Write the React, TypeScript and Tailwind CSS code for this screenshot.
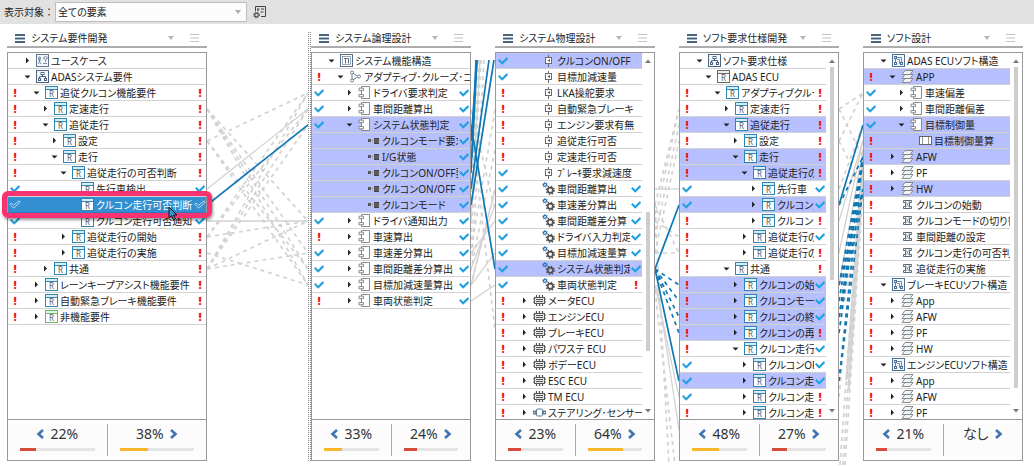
// Traceability view — element trees side by side, linked by connector lines.

import { useState } from 'react';
import type { ReactNode } from 'react';
import clsx from 'clsx';

type Mark = 'ok' | 'ng' | null;
type IconName =
  | 'usecase'
  | 'org'
  | 'req'
  | 'reqGreen'
  | 'reqGray'
  | 'function'
  | 'split'
  | 'component'
  | 'port'
  | 'pin'
  | 'gears'
  | 'chip'
  | 'sensor'
  | 'structure'
  | 'layers'
  | 'frame'
  | 'routine';
type Toggle = 'open' | 'closed' | null;

interface Row {
  label: string;
  icon: IconName;
  level: number;
  toggle: Toggle;
  left: Mark;
  right: Mark;
  lit?: boolean;
}

interface Rate {
  text: string;
  value?: number;
  tone?: 'red' | 'amber';
}

interface PanelData {
  title: string;
  rows: Row[];
  rates: [Rate, Rate];
  scroll?: { top: number; size: number };
  selected?: number;
}

const MARKS: Record<string, Mark> = { o: 'ok', x: 'ng', '-': null };
const TOGGLES: Record<string, Toggle> = { v: 'open', '>': 'closed', '-': null };

// flags: left mark, toggle, right mark, optional "*" for a linked row
function row(flags: string, level: number, icon: IconName, label: string): Row {
  return {
    label,
    icon,
    level,
    left: MARKS[flags[0]],
    toggle: TOGGLES[flags[1]],
    right: MARKS[flags[2]],
    lit: flags[3] === '*',
  };
}

const REQUIREMENTS: PanelData = {
  title: 'システム要件開発',
  selected: 9,
  rates: [
    { text: '22%', value: 22, tone: 'red' },
    { text: '38%', value: 38, tone: 'amber' },
  ],
  rows: [
    row('->-', 0, 'usecase', 'ユースケース'),
    row('-v-', 0, 'org', 'ADASシステム要件'),
    row('xvx', 1, 'req', '追従クルコン機能要件'),
    row('x>x', 2, 'req', '定速走行'),
    row('xvx', 2, 'req', '追従走行'),
    row('x>x', 3, 'req', '設定'),
    row('xvx', 3, 'req', '走行'),
    row('xvx', 4, 'req', '追従走行の可否判断'),
    row('o-o', 5, 'req', '先行車検出'),
    row('o-o', 5, 'req', 'クルコン走行可否判断'),
    row('o-o', 5, 'req', 'クルコン走行可否通知'),
    row('x>x', 4, 'req', '追従走行の開始'),
    row('x>x', 4, 'req', '追従走行の実施'),
    row('x>x', 2, 'req', '共通'),
    row('x>x', 1, 'req', 'レーンキープアシスト機能要件'),
    row('x>x', 1, 'req', '自動緊急ブレーキ機能要件'),
    row('x>x', 1, 'reqGreen', '非機能要件'),
  ],
};

const LOGICAL: PanelData = {
  title: 'システム論理設計',
  rates: [
    { text: '33%', value: 33, tone: 'amber' },
    { text: '24%', value: 25, tone: 'red' },
  ],
  rows: [
    row('-v-', 0, 'function', 'システム機能構造'),
    row('xv-', 1, 'split', 'アダプティブ･クルーズ･コ'),
    row('o>o', 2, 'component', 'ドライバ要求判定'),
    row('o>o', 2, 'component', '車間距離算出'),
    row('ovo*', 2, 'component', 'システム状態判定'),
    row('--o*', 3, 'port', 'クルコンモード要求'),
    row('--o*', 3, 'port', 'I/G状態'),
    row('--o*', 3, 'port', 'クルコンON/OFF要'),
    row('--o*', 3, 'port', 'クルコンON/OFF'),
    row('--o*', 3, 'port', 'クルコンモード'),
    row('o>o', 2, 'component', 'ドライバ通知出力'),
    row('x>o', 2, 'component', '車速算出'),
    row('o>o', 2, 'component', '車速差分算出'),
    row('o>o', 2, 'component', '車間距離差分算出'),
    row('o>o', 2, 'component', '目標加減速量算出'),
    row('x>o', 2, 'component', '車両状態判定'),
  ],
};

const PHYSICAL: PanelData = {
  title: 'システム物理設計',
  scroll: { top: 43, size: 41 },
  rates: [
    { text: '23%', value: 24, tone: 'red' },
    { text: '64%', value: 65, tone: 'amber' },
  ],
  rows: [
    row('o--*', 2, 'pin', 'クルコンON/OFF'),
    row('o--', 2, 'pin', '目標加減速量'),
    row('x--', 2, 'pin', 'LKA操舵要求'),
    row('x--', 2, 'pin', '自動緊急ブレーキ'),
    row('x--', 2, 'pin', 'エンジン要求有無'),
    row('x--', 2, 'pin', '追従走行可否'),
    row('x--', 2, 'pin', '定速走行可否'),
    row('o--', 2, 'pin', 'ﾌﾞﾚｰｷ要求減速度'),
    row('o-o', 2, 'gears', '車間距離算出'),
    row('o-o', 2, 'gears', '車速差分算出'),
    row('o-o', 2, 'gears', '車間距離差分算'),
    row('o-o', 2, 'gears', 'ドライバ入力判定'),
    row('o-o', 2, 'gears', '目標加減速量算'),
    row('o-o*', 2, 'gears', 'システム状態判定'),
    row('o-x', 2, 'gears', '車両状態判定'),
    row('x>-', 1, 'chip', 'メータECU'),
    row('x>-', 1, 'chip', 'エンジンECU'),
    row('x>-', 1, 'chip', 'ブレーキECU'),
    row('x>-', 1, 'chip', 'パワステ ECU'),
    row('x>-', 1, 'chip', 'ボデーECU'),
    row('x>-', 1, 'chip', 'ESC ECU'),
    row('x>-', 1, 'chip', 'TM ECU'),
    row('x>-', 1, 'sensor', 'ステアリング･センサー'),
  ],
};

const SOFT_REQUIREMENTS: PanelData = {
  title: 'ソフト要求仕様開発',
  scroll: { top: 0, size: 63 },
  rates: [
    { text: '48%', value: 50, tone: 'amber' },
    { text: '27%', value: 28, tone: 'red' },
  ],
  rows: [
    row('-v-', 0, 'org', 'ソフト要求仕様'),
    row('-v-', 1, 'reqGray', 'ADAS ECU'),
    row('xvx', 2, 'req', 'アダプティブクルーズ'),
    row('x>x', 3, 'req', '定速走行'),
    row('xvx*', 3, 'req', '追従走行'),
    row('x>x', 4, 'req', '設定'),
    row('xvx*', 4, 'req', '走行'),
    row('xvx*', 5, 'req', '追従走行の'),
    row('o>o', 6, 'req', '先行車'),
    row('o>o*', 6, 'req', 'クルコン走'),
    row('x>x', 6, 'req', 'クルコン走'),
    row('x>o', 5, 'req', '追従走行の'),
    row('x>x', 5, 'req', '追従走行の'),
    row('xvx', 3, 'req', '共通'),
    row('x>o*', 4, 'req', 'クルコンの始動'),
    row('x>o*', 4, 'req', 'クルコンモード'),
    row('x>o*', 4, 'req', 'クルコンの終了'),
    row('x>x*', 4, 'req', 'クルコンの再開'),
    row('xvo', 4, 'req', 'クルコン走行の'),
    row('o>o', 5, 'req', 'クルコンOF'),
    row('o>o*', 5, 'req', 'クルコン走行'),
    row('o>x', 5, 'req', 'クルコン走行'),
    row('x>x', 5, 'req', 'クルコン走行'),
  ],
};

const SOFT_DESIGN: PanelData = {
  title: 'ソフト設計',
  scroll: { top: 0, size: 95 },
  rates: [{ text: '21%', value: 21, tone: 'red' }, { text: 'なし' }],
  rows: [
    row('-v-', 0, 'structure', 'ADAS ECUソフト構造'),
    row('xv-*', 1, 'layers', 'APP'),
    row('o>-', 2, 'component', '車速偏差'),
    row('o>-', 2, 'component', '車間距離偏差'),
    row('ov-*', 2, 'component', '目標制御量'),
    row('x--*', 3, 'frame', '目標制御量算'),
    row('x>-*', 1, 'layers', 'AFW'),
    row('x>-', 1, 'layers', 'PF'),
    row('x>-*', 1, 'layers', 'HW'),
    row('x--', 1, 'routine', 'クルコンの始動'),
    row('x--', 1, 'routine', 'クルコンモードの切り替'),
    row('x--', 1, 'routine', '車間距離の設定'),
    row('x--', 1, 'routine', 'クルコン走行の可否判'),
    row('x--', 1, 'routine', '追従走行の実施'),
    row('-v-', 0, 'structure', 'ブレーキECUソフト構造'),
    row('x>-', 1, 'layers', 'App'),
    row('x>-', 1, 'layers', 'AFW'),
    row('x>-', 1, 'layers', 'PF'),
    row('x>-', 1, 'layers', 'HW'),
    row('-v-', 0, 'structure', 'エンジンECUソフト構造'),
    row('x>-', 1, 'layers', 'App'),
    row('x>-', 1, 'layers', 'AFW'),
    row('x>-', 1, 'layers', 'PF'),
  ],
};

// kind: g = gray, b = blue; upper case = solid, lower case = dashed
type Link = [kind: 'g' | 'G' | 'b' | 'B', x1: number, y1: number, x2: number, y2: number];

const rowY = (i: number) => 61 + i * 16;

function fan(kind: Link[0], width: number, from: number, to: number[]): Link[] {
  return to.map(t => [kind, 0, rowY(from), width, rowY(t)]);
}

const LINKS_1: Link[] = [
  ...fan('g', 101, 3, [10, 12, 13, 14]),
  ...fan('g', 101, 5, [2, 13, 14]),
  ...fan('g', 101, 11, [2, 3, 10]),
  ...fan('g', 101, 12, [14]),
  ...fan('g', 101, 13, [2, 3, 4, 10, 12]),
  ...fan('G', 101, 8, [3]),
  ...fan('G', 101, 10, [10]),
  ...fan('B', 101, 9, [4]),
];

const LINKS_2: Link[] = [
  ['g', 8, 60, 0, 200],
  ['g', 10, 60, 0, 240],
  ['g', 13, 60, 1, 260],
  ['g', 24, 110, 0, 250],
  ['g', 24, 150, 0, 270],
  ['g', 24, 190, 0, 285],
  ['g', 0, 125, 24, 330],
  ['g', 0, 110, 24, 210],
  ['G', 9, 60, 0, 221],
  ['G', 24, 205, 0, 269],
  ['G', 24, 221, 0, 253],
  ['G', 24, 189, 0, 285],
  ['G', 24, 253, 0, 285],
  ['G', 24, 285, 0, 301],
  ['B', 5, 60, 0, 173],
  ['B', 6, 60, 0, 141],
  ['B', 6, 60, 1, 157],
  ['B', 18, 60, 0, 189],
  ['B', 23, 60, 0, 205],
  ['B', 0, 125, 24, 269],
];

const LINKS_3: Link[] = [
  ['g', 0, 205, 24, 109],
  ['g', 0, 221, 24, 109],
  ['g', 0, 237, 24, 125],
  ['g', 0, 253, 24, 141],
  ['g', 0, 205, 24, 253],
  ['g', 0, 221, 24, 237],
  ['g', 0, 253, 24, 253],
  ['g', 0, 210, 14, 465],
  ['g', 0, 290, 20, 465],
  ['G', 0, 189, 24, 189],
  ['G', 0, 285, 24, 397],
  ['G', 2, 285, 24, 430],
  ...fan('b', 24, 13, [14, 15, 16, 17]),
  ...fan('B', 24, 13, [9, 20]),
];

const LINKS_4: Link[] = [
  ['g', 0, 109, 24, 93],
  ['g', 0, 109, 24, 157],
  ['g', 0, 141, 24, 93],
  ['g', 0, 141, 24, 189],
  ['g', 0, 189, 24, 125],
  ['G', 0, 221, 24, 140],
  ['G', 0, 253, 24, 140],
  ['G', 0, 285, 24, 150],
  ['G', 7, 380, 24, 150],
  ['G', 8, 380, 24, 160],
  ['G', 9, 390, 24, 170],
  ['G', 10, 390, 24, 180],
  ['g', 0, 301, 24, 157],
  ['g', 0, 333, 24, 189],
  ['g', 0, 397, 24, 157],
  ['g', 1, 465, 24, 150],
  ['g', 4, 465, 24, 157],
  ['g', 6, 465, 24, 189],
  ['b', 0, 205, 24, 157],
  ...[285, 301, 317, 333, 381].map((y): Link => ['b', 0, y, 24, 157]),
  ...[285, 317, 381].map((y): Link => ['b', 0, y, 24, 189]),
  ['B', 0, 205, 24, 125],
];

function Connectors({ width, links }: { width: number; links: Link[] }) {
  return (
    <svg
      className="h-full min-w-0 flex-1"
      viewBox={`0 24 ${width} 442`}
      preserveAspectRatio="none"
      aria-hidden="true"
    >
      {links.map(([kind, x1, y1, x2, y2], i) => {
        const blue = kind.toLowerCase() === 'b';
        const dashed = kind === kind.toLowerCase();
        return (
          <line
            key={i}
            x1={x1}
            y1={y1}
            x2={x2}
            y2={y2}
            stroke={blue ? '#0f78b4' : '#d2d2d2'}
            strokeWidth={dashed || blue ? 1.7 : 1.3}
            strokeDasharray={dashed ? '4 4' : undefined}
          />
        );
      })}
    </svg>
  );
}

function ReqIcon({ color, fill }: { color: string; fill: string }) {
  return (
    <>
      <rect x=".5" y=".5" width="12" height="12" fill="#fff" stroke={color} />
      <path d="M1 1h11v2H1z" fill={fill} />
      <path d="M1 3.5h11" stroke={color} />
      <text x="6.5" y="11" textAnchor="middle" fontSize="8" fill="#555">
        R
      </text>
    </>
  );
}

const ICONS: Record<IconName, ReactNode> = {
  req: <ReqIcon color="#2f86b0" fill="#d5eefa" />,
  reqGreen: <ReqIcon color="#6cb86c" fill="#e2f6e2" />,
  reqGray: <ReqIcon color="#666" fill="#eee" />,
  usecase: (
    <g fill="none" stroke="#5f7590">
      <rect x=".5" y=".5" width="12" height="12" fill="#f3f6fa" />
      <circle cx="3.5" cy="4" r="1" />
      <path d="M3.5 5v3M2 6h3M2 10l1.5-2L5 10M9.500 6v2M7 9.500h4" strokeWidth=".8" />
      <ellipse cx="9.500" cy="4" rx="2" ry="1.300" strokeWidth=".8" />
    </g>
  ),
  org: (
    <g fill="none" stroke="#4d6480">
      <rect x=".5" y=".5" width="12" height="12" fill="#f3f6fa" />
      <rect x="5" y="2.500" width="3" height="2" />
      <path d="M6.500 5v2M3.500 8V6.500h6V8" />
      <rect x="2.500" y="8.500" width="2" height="2" />
      <rect x="8.500" y="8.500" width="2" height="2" />
    </g>
  ),
  function: (
    <g fill="none" stroke="#5a7089">
      <rect x=".5" y=".5" width="12" height="12" />
      <rect x="2.500" y="2.500" width="8" height="8" strokeWidth=".6" />
      <path d="M4 4.500h1.500v5M5.500 4.500h3v5" />
    </g>
  ),
  split: (
    <g fill="#fff" stroke="#6f8296">
      <path d="M3 2.500l6 4-6 4z" fill="none" />
      <circle cx="3" cy="2.500" r="1.500" />
      <circle cx="3" cy="10.500" r="1.500" />
      <circle cx="10" cy="6.500" r="1.500" />
    </g>
  ),
  component: (
    <g fill="#fff" stroke="#808080" strokeWidth=".9">
      <path d="M3.500 .5h8v12h-8z" />
      <path d="M5.500 2.200H1v2.300h4.500zM5.500 8.500H1v2.300h4.500z" />
    </g>
  ),
  port: (
    <g>
      <path d="M1 5h3v3H1z" fill="#555" />
      <path d="M5 6h1v1H5z" fill="#777" />
      <path d="M7 4h5v6H7z" fill="#444" />
      <path d="M7 6h5M7 8h5" stroke="#999" strokeWidth=".6" />
    </g>
  ),
  pin: (
    <g fill="none" stroke="#6a6a6a">
      <path d="M6.500 1v2M6.500 10v3" />
      <rect x="3.500" y="3.500" width="6" height="6" fill="#fff" />
      <path d="M8 5v3L5.500 6.500z" fill="#555" stroke="none" />
    </g>
  ),
  gears: (
    <g fill="none">
      <circle cx="3" cy="2.800" r="1.500" stroke="#2e6fb5" strokeWidth="1.200" />
      <circle cx="3" cy="2.800" r="2.500" stroke="#2e6fb5" strokeDasharray="1 1.600" />
      <circle cx="8.300" cy="8.300" r="2.600" stroke="#505050" strokeWidth="1.700" />
      <circle cx="8.300" cy="8.300" r="3.900" stroke="#505050" strokeWidth="1.500" strokeDasharray="1.500 1.560" />
    </g>
  ),
  chip: (
    <g fill="none" stroke="#555">
      <path d="M3.500 1v11M6.500 1v11M9.500 1v11" strokeWidth="1.200" />
      <rect x="1.500" y="3.500" width="10" height="6" fill="#e6e6e6" />
      <path d="M3 5.500h7M3 7.500h7M0 5h1M0 8h1M12 5h1M12 8h1" />
    </g>
  ),
  sensor: (
    <g fill="#fff" stroke="#5c7a94">
      <rect x="3.500" y="3" width="6" height="7" rx="1" />
      <rect x=".5" y="5" width="2" height="3" />
      <rect x="10.500" y="5" width="2" height="3" />
    </g>
  ),
  structure: (
    <g fill="none" stroke="#4d6f94">
      <rect x=".5" y=".5" width="12" height="12" fill="#f4f8fc" />
      <rect x="2.500" y="2.500" width="2" height="2" />
      <rect x="2.500" y="8.500" width="2" height="2" />
      <rect x="8.500" y="8.500" width="2" height="2" />
      <path d="M5 3.500h4.500V8M3.500 5v3M5 5.500h2.500v4H8" strokeWidth=".8" />
    </g>
  ),
  layers: (
    <g fill="#eef3f7" stroke="#808080" strokeWidth=".9">
      <path d="M4 8.500h8l-3 4H1z" />
      <path d="M4 4.500h8l-3 4H1z" />
      <path d="M4 .5h8l-3 4H1z" />
    </g>
  ),
  frame: (
    <g fill="none" stroke="#666">
      <rect x=".5" y="2.500" width="12" height="8" fill="#fff" />
      <path d="M3.500 2v9M9.500 2v9" strokeWidth=".7" />
    </g>
  ),
  routine: (
    <g fill="none" stroke="#52697f">
      <path d="M2.500 2.500h8v2h-2v4h2v2h-8v-2h2v-4h-2z" fill="#fff" />
      <path d="M4 2.500l5 8M9 2.500l-5 8" strokeWidth=".6" />
    </g>
  ),
};

function MarkIcon({ mark, selected }: { mark: Mark; selected: boolean }) {
  if (mark === 'ng') {
    return <span className="text-[11px] leading-none font-black text-[#f51414]">!</span>;
  }
  if (mark === 'ok' && selected) {
    return (
      <svg width="12" height="9" viewBox="0 0 12 9" fill="none" role="img" aria-label="OK">
        <path
          d="M.8 4.300l1.400-1.400 2.400 2.400L10 .8l1.300 1.300L4.600 8.200z"
          stroke="#c5e6fa"
          strokeWidth=".9"
        />
      </svg>
    );
  }
  if (mark === 'ok') {
    return (
      <svg width="10" height="8" viewBox="0 0 10 8" fill="none" role="img" aria-label="OK">
        <path d="M.8 2.800l3.400 3.400L9.400 1" stroke="#1f9fe0" strokeWidth="2.100" />
      </svg>
    );
  }
  return null;
}

function ToggleButton({ toggle, label }: { toggle: Toggle; label: string }) {
  if (!toggle) return <span className="w-2.5 shrink-0" />;
  return (
    <button
      type="button"
      aria-label={label}
      aria-expanded={toggle === 'open'}
      className="flex w-2.5 shrink-0 items-center justify-center"
    >
      <svg width="7" height="7" viewBox="0 0 7 7" fill="#222">
        {toggle === 'open' ? <path d="M.5 2.500h6l-3 3z" /> : <path d="M2 .5l3 3-3 3z" />}
      </svg>
    </button>
  );
}

function TreeRow({ item, selected }: { item: Row; selected: boolean }) {
  return (
    <li
      className={clsx(
        'relative flex h-4 shrink-0 items-stretch border-b',
        selected && 'z-10 border-[#2b7fc0] bg-[#338fd0] text-white',
        !selected && 'border-[#d2d2d2]',
        item.lit && 'bg-[#b6c0ff]',
      )}
    >
      <span className="flex w-3.5 shrink-0 items-center justify-center">
        <MarkIcon mark={item.left} selected={selected} />
      </span>
      <span className="shrink-0" style={{ width: item.level * 9 }} />
      <ToggleButton toggle={item.toggle} label={item.label} />
      <span className="flex min-w-0 flex-1 items-center gap-[2px] overflow-hidden pl-1">
        <svg className="shrink-0" width="13" height="13" viewBox="0 0 13 13" aria-hidden="true">
          {ICONS[item.icon]}
        </svg>
        <span className="min-w-0 flex-1 overflow-hidden pt-px leading-4 whitespace-nowrap">
          {item.label}
        </span>
      </span>
      {item.right && (
        <span className="flex w-3 shrink-0 items-center justify-center">
          <MarkIcon mark={item.right} selected={selected} />
        </span>
      )}
      {selected && (
        <>
          <span className="pointer-events-none absolute -inset-1.5 rounded-md border-[5px] border-[#fb3271] shadow-[1px_2px_3px_rgba(0,0,0,0.4)]" />
          <svg
            className="pointer-events-none absolute right-7 -bottom-2.5"
            width="10"
            height="16"
            viewBox="0 0 10 16"
            aria-hidden="true"
          >
            <path d="M1 1v11l2.500-2.500L5.500 14l2-1-2-4H9z" fill="#3a93cf" stroke="#111" />
          </svg>
        </>
      )}
    </li>
  );
}

function ScrollBar({ top, size }: { top: number; size: number }) {
  return (
    <div className="flex w-3 shrink-0 flex-col items-center gap-1 py-1.5" aria-hidden="true">
      <svg width="6" height="4" viewBox="0 0 6 4" fill="#777">
        <path d="M0 4l3-3.500L6 4z" />
      </svg>
      <div className="w-1 flex-1">
        <div style={{ height: `${top}%` }} />
        <div className="bg-[#cdcdcd]" style={{ height: `${size}%` }} />
      </div>
      <svg width="6" height="4" viewBox="0 0 6 4" fill="#777">
        <path d="M0 0l3 3.500L6 0z" />
      </svg>
    </div>
  );
}

function RateCell({ rate, side }: { rate: Rate; side: 'left' | 'right' }) {
  const chevron = (
    <svg width="8" height="10" viewBox="0 0 8 10" fill="none" stroke="#3f74ae" strokeWidth="2.600">
      {side === 'left' ? <path d="M7 1L2.500 5 7 9" /> : <path d="M1 1l4.500 4L1 9" />}
    </svg>
  );
  return (
    <div className="flex min-w-0 flex-1 flex-col px-3 pt-1">
      <button
        type="button"
        className="flex h-5 items-center justify-center gap-1.5 text-[14px] leading-5 text-[#333]"
      >
        {side === 'left' && chevron}
        {rate.text}
        {side === 'right' && chevron}
      </button>
      {rate.value !== undefined && (
        <div className="mt-1 h-[3px] bg-[#e4e4e4]">
          <div
            className={clsx('h-full', rate.tone === 'red' ? 'bg-[#d94a3d]' : 'bg-[#f9b62b]')}
            style={{ width: `${rate.value}%` }}
          />
        </div>
      )}
    </div>
  );
}

function Panel({ data }: { data: PanelData }) {
  return (
    <section className="mb-[5px] flex min-h-0 min-w-0 flex-col">
      <header className="flex h-6 shrink-0 items-center border-b-2 border-[#adadad] px-2 pt-1.5">
        <svg className="shrink-0" width="10" height="9" viewBox="0 0 10 9" fill="#4b6480" aria-hidden="true">
          <path d="M0 0h10v2H0zM0 3.500h10v2H0zM0 7h10v2H0z" />
        </svg>
        <h2 className="min-w-0 flex-1 overflow-hidden pl-1.5 text-[10px] leading-4 whitespace-nowrap">
          {data.title}
        </h2>
        <button type="button" aria-label="絞り込み" className="mr-4 shrink-0">
          <svg width="6" height="4" viewBox="0 0 6 4" fill="#b5b5b5">
            <path d="M0 0h6L3 4z" />
          </svg>
        </button>
        <button type="button" aria-label="メニュー" className="shrink-0">
          <svg width="9" height="8" viewBox="0 0 9 8" fill="#c4c4c4">
            <path d="M0 0h9v1H0zM0 3.500h9v1H0zM0 7h9v1H0z" />
          </svg>
        </button>
      </header>
      <div className="mt-1 flex min-h-0 flex-1 flex-col border border-[#999] bg-white">
        <div className={clsx('flex min-h-0 flex-1', data.scroll && 'overflow-hidden')}>
          <ul className="flex min-w-0 flex-1 flex-col">
            {data.rows.map((item, i) => (
              <TreeRow key={i} item={item} selected={i === data.selected} />
            ))}
          </ul>
          {data.scroll && <ScrollBar {...data.scroll} />}
        </div>
        <footer className="flex h-[41px] shrink-0 border-t border-[#999] bg-[#fcfcfc]">
          <RateCell rate={data.rates[0]} side="left" />
          <div className="my-1 w-px shrink-0 bg-[#aaa]" />
          <RateCell rate={data.rates[1]} side="right" />
        </footer>
      </div>
    </section>
  );
}

function Toolbar() {
  const [target, setTarget] = useState('all');
  return (
    <div className="flex h-6 shrink-0 items-center bg-[#e1e1e1] pl-1 [font-feature-settings:normal]">
      <label htmlFor="target" className="text-[10px] leading-4">
        表示対象：
      </label>
      <div className="relative ml-px">
        <select
          id="target"
          value={target}
          onChange={e => setTarget(e.target.value)}
          className="block h-5 w-48 appearance-none border border-[#bdbdbd] bg-[#fcfcfc] pl-0.5 text-[10px] leading-4 [font-feature-settings:'palt']"
        >
          <option value="all">全ての要素</option>
          <option value="linked">リンクのある要素</option>
        </select>
        <svg
          className="pointer-events-none absolute top-2 right-1.5"
          width="6"
          height="4"
          viewBox="0 0 6 4"
          fill="#aaa"
        >
          <path d="M0 0h6L3 4z" />
        </svg>
      </div>
      <button type="button" aria-label="表示設定" className="ml-1.5">
        <svg width="13" height="13" viewBox="0 0 13 13" fill="none" stroke="#444">
          <path d="M2.500 5V.5h10v10H8" />
          <path d="M4 3h2.500M8 3h3M7.500 6h3M5 3v2" strokeWidth="1.200" />
          <circle cx="3.500" cy="9" r="1.800" strokeWidth="1.200" />
          <circle cx="3.500" cy="9" r="3" strokeDasharray="1.200 1.200" />
        </svg>
      </button>
    </div>
  );
}

export default function App() {
  return (
    <div className="flex h-screen flex-col bg-white font-['Noto_Sans','Noto_Sans_CJK_JP',sans-serif] text-[10px] text-[#222] [font-feature-settings:'palt']">
      <Toolbar />
      <main className="grid min-h-0 flex-1 grid-cols-[minmax(0,200fr)_minmax(0,104fr)_minmax(0,160fr)_minmax(0,24fr)_minmax(0,160fr)_minmax(0,24fr)_minmax(0,160fr)_minmax(0,24fr)_minmax(0,160fr)] grid-rows-[minmax(0,1fr)] pr-[11px] pl-[7px]">
        <Panel data={REQUIREMENTS} />
        <div className="flex min-w-0">
          <Connectors width={101} links={LINKS_1} />
          <div className="mt-2 mb-[5px] w-[3px] shrink-0 border-x border-dotted border-[#888]" />
        </div>
        <Panel data={LOGICAL} />
        <div className="flex min-w-0">
          <Connectors width={24} links={LINKS_2} />
        </div>
        <Panel data={PHYSICAL} />
        <div className="flex min-w-0">
          <Connectors width={24} links={LINKS_3} />
        </div>
        <Panel data={SOFT_REQUIREMENTS} />
        <div className="flex min-w-0">
          <Connectors width={24} links={LINKS_4} />
        </div>
        <Panel data={SOFT_DESIGN} />
      </main>
    </div>
  );
}
